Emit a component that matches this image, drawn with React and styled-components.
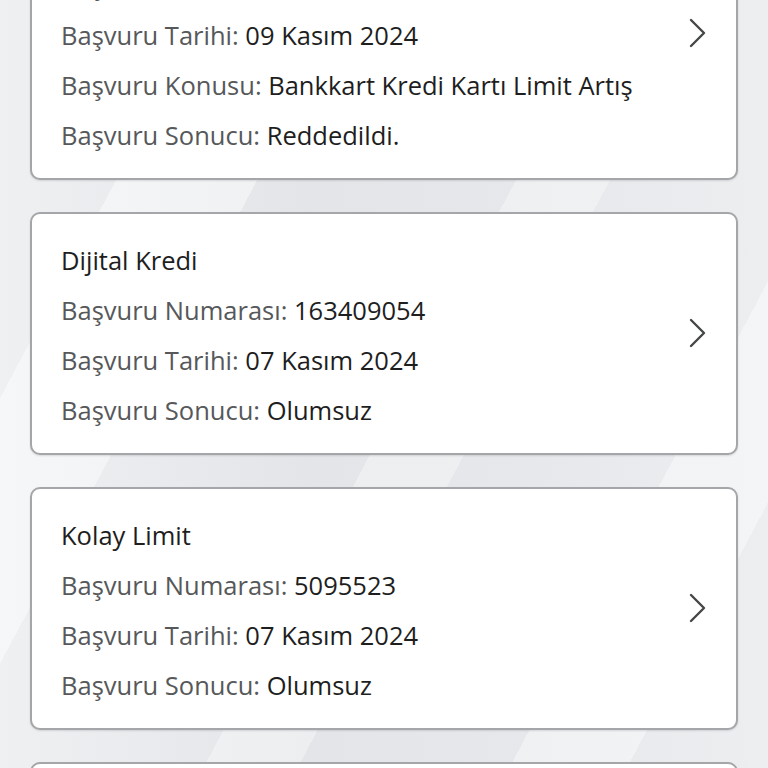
import React from 'react'
import styled, { createGlobalStyle } from 'styled-components'

const GlobalStyle = createGlobalStyle`
  html, body {
    margin: 0;
    padding: 0;
    height: 768px;
    overflow: hidden;
  }
  body {
    font-family: "Open Sans", Lato, sans-serif;
    background-color: #e5e7ea;
    background-image:
      linear-gradient(118deg, transparent 0 18%, rgba(255,255,255,0.45) 18% 30%, transparent 30% 52%, rgba(255,255,255,0.35) 52% 60%, transparent 60% 78%, rgba(255,255,255,0.4) 78% 88%, transparent 88%),
      linear-gradient(90deg, #eef0f2 0%, #e3e5e8 40%, #e6e8eb 70%, #eceef0 100%);
  }
`

const Page = styled.div`
  display: flex;
  flex-direction: column;
  gap: 32px;
  padding: 0 30px;
  margin-top: -113px;
`

const Card = styled.div`
  display: flex;
  align-items: center;
  background: #fff;
  border: 2px solid #a4a6a9;
  border-radius: 10px;
  box-shadow: 0 1px 2px rgba(0, 0, 0, 0.12);
  padding: 21px 30px 18px 29px;
`

const Info = styled.div`
  flex: 1;
  display: flex;
  flex-direction: column;
`

const Title = styled.div`
  font-size: 25.5px;
  line-height: 50px;
  color: #1e1e1e;
`

const Row = styled.div`
  font-size: 25.5px;
  line-height: 50px;
  color: #1e1e1e;
  white-space: nowrap;
`

const Label = styled.span`
  color: #56585a;
`

const Chevron = styled.svg`
  width: 17px;
  height: 30px;
  flex-shrink: 0;
  margin-top: -4px;
`

const cards = [
  {
    title: 'Kredi Kartı Limit Artışı',
    rows: [
      ['Başvuru Numarası', '2187456'],
      ['Başvuru Tarihi', '09 Kasım 2024'],
      ['Başvuru Konusu', 'Bankkart Kredi Kartı Limit Artış'],
      ['Başvuru Sonucu', 'Reddedildi.'],
    ],
  },
  {
    title: 'Dijital Kredi',
    rows: [
      ['Başvuru Numarası', '163409054'],
      ['Başvuru Tarihi', '07 Kasım 2024'],
      ['Başvuru Sonucu', 'Olumsuz'],
    ],
  },
  {
    title: 'Kolay Limit',
    rows: [
      ['Başvuru Numarası', '5095523'],
      ['Başvuru Tarihi', '07 Kasım 2024'],
      ['Başvuru Sonucu', 'Olumsuz'],
    ],
  },
  {
    title: 'İhtiyaç Kredisi',
    rows: [
      ['Başvuru Numarası', '4987120'],
      ['Başvuru Tarihi', '01 Kasım 2024'],
      ['Başvuru Sonucu', 'Olumsuz'],
    ],
  },
]

function ApplicationCard({ item }) {
  return (
    <Card>
      <Info>
        <Title>{item.title}</Title>
        {item.rows.map(([label, value]) => (
          <Row key={label}>
            <Label>{label}:</Label> {value}
          </Row>
        ))}
      </Info>
      <Chevron viewBox="0 0 17 30">
        <path d="M2 2 L15 15 L2 28" fill="none" stroke="#444648" strokeWidth="2.4" strokeLinecap="round" strokeLinejoin="round" />
      </Chevron>
    </Card>
  )
}

export default function App() {
  return (
    <>
      <GlobalStyle />
      <Page>
        {cards.map((item) => (
          <ApplicationCard key={item.title} item={item} />
        ))}
      </Page>
    </>
  )
}
